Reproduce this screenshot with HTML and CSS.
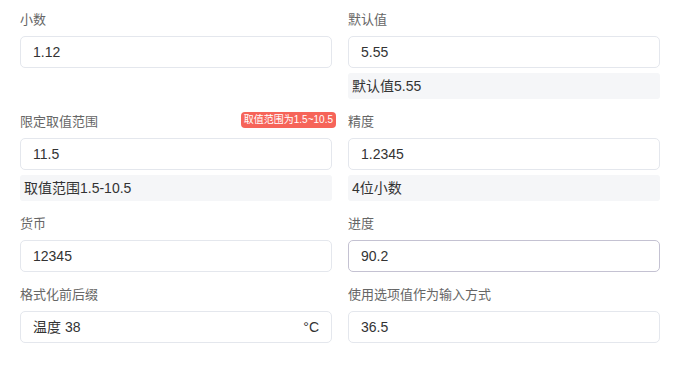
FILE: index.html
```html
<!DOCTYPE html>
<html lang="zh-CN">
<head>
    <meta charset="UTF-8">
    <title>数字输入</title>
    <link rel="stylesheet" href="styles.css">
</head>
<body>
<div class="form-grid">
    <div class="field">
        <label class="field-label">小数</label>
        <div class="input-box">1.12</div>
    </div>
    <div class="field">
        <label class="field-label">默认值</label>
        <div class="input-box">5.55</div>
        <div class="hint">默认值5.55</div>
    </div>

    <div class="field">
        <label class="field-label">限定取值范围</label>
        <span class="error-badge">取值范围为1.5~10.5</span>
        <div class="input-box">11.5</div>
        <div class="hint">取值范围1.5-10.5</div>
    </div>
    <div class="field">
        <label class="field-label">精度</label>
        <div class="input-box">1.2345</div>
        <div class="hint">4位小数</div>
    </div>

    <div class="field">
        <label class="field-label">货币</label>
        <div class="input-box">12345</div>
    </div>
    <div class="field">
        <label class="field-label">进度</label>
        <div class="input-box hover">90.2</div>
    </div>

    <div class="field">
        <label class="field-label">格式化前后缀</label>
        <div class="input-box affix">
            <span>温度 38</span>
            <span class="suffix">°C</span>
        </div>
    </div>
    <div class="field">
        <label class="field-label">使用选项值作为输入方式</label>
        <div class="input-box">36.5</div>
    </div>
</div>
</body>
</html>
```
FILE: styles.css
```css
* {
    box-sizing: border-box;
}
body {
    margin: 0;
    background-color: #fff;
    color: #333;
    font-family: "Liberation Sans", "Noto Sans CJK SC", sans-serif;
}
.form-grid {
    display: grid;
    grid-template-columns: 312px 312px;
    column-gap: 16px;
    row-gap: 13px;
    align-items: start;
    padding: 10px 20px;
}
.field {
    position: relative;
}
.field-label {
    display: block;
    height: 20px;
    line-height: 20px;
    margin-bottom: 6px;
    font-size: 13px;
    color: #666;
}
.error-badge {
    position: absolute;
    top: 0;
    right: -4px;
    height: 16px;
    line-height: 16px;
    padding: 0 3px;
    border-radius: 4px;
    background-color: #f66459;
    color: #fff;
    font-size: 10px;
}
.input-box {
    height: 32px;
    line-height: 30px;
    padding: 0 12px;
    border: 1px solid #e4e7ed;
    border-radius: 5px;
    font-size: 14px;
    color: #333;
}
.input-box.hover {
    border-color: #c4c2d2;
}
.input-box.affix {
    display: flex;
    justify-content: space-between;
}
.hint {
    margin-top: 5px;
    height: 26px;
    line-height: 26px;
    padding: 0 4px;
    border-radius: 3px;
    background-color: #f5f6f8;
    font-size: 14px;
    color: #333;
}
```
